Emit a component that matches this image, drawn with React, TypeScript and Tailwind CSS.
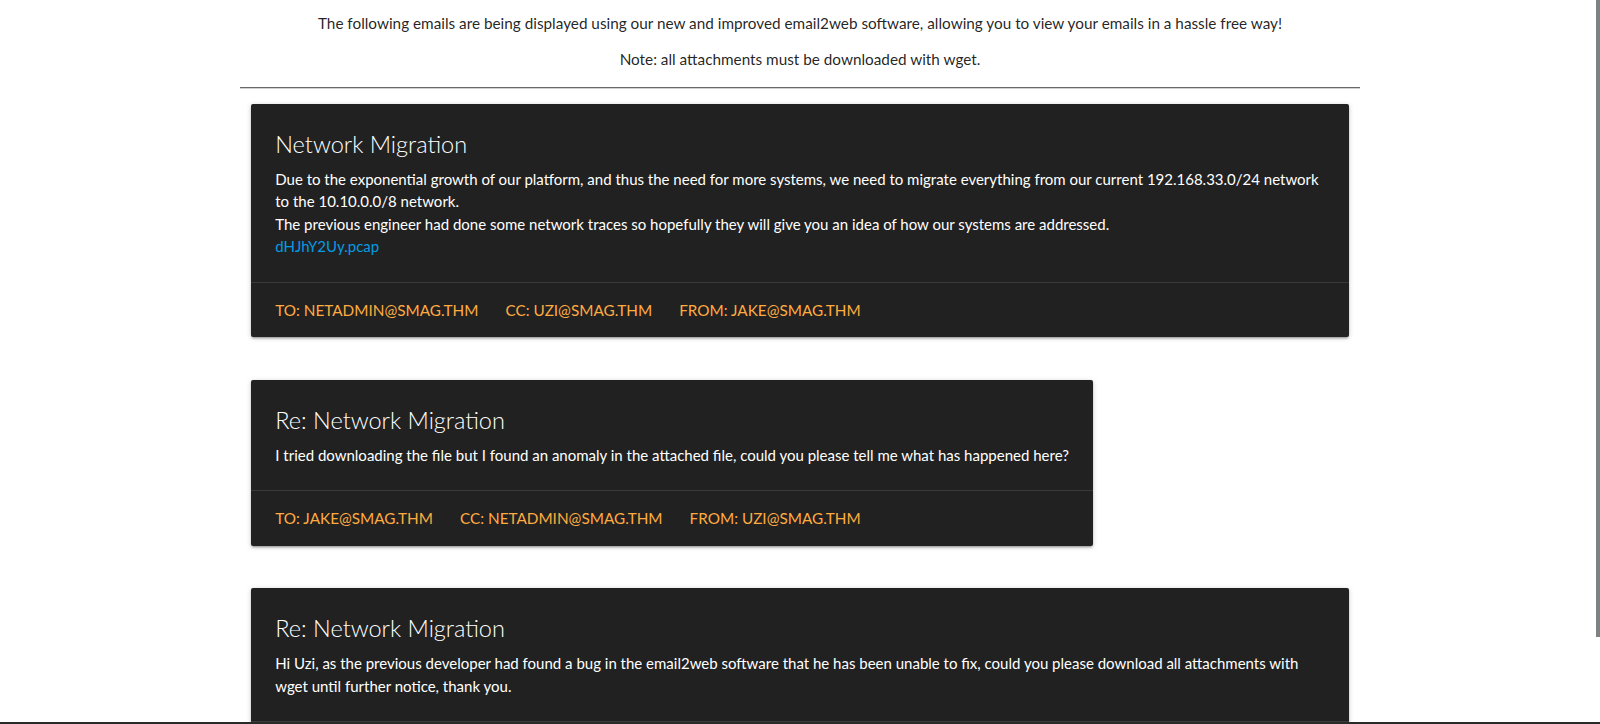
import React from "react";

type Email = {
  subject: string;
  body: React.ReactNode;
  to: string;
  cc: string;
  from: string;
};

const emails: Email[] = [
  {
    subject: "Network Migration",
    body: (
      <>
        Due to the exponential growth of our platform, and thus the need for more systems, we need to migrate
        everything from our current 192.168.33.0/24 network to the 10.10.0.0/8 network.
        <br />
        The previous engineer had done some network traces so hopefully they will give you an idea of how our
        systems are addressed.
        <br />
        <a href="#" className="text-[#039be5]">
          dHJhY2Uy.pcap
        </a>
      </>
    ),
    to: "netadmin@smag.thm",
    cc: "uzi@smag.thm",
    from: "jake@smag.thm",
  },
  {
    subject: "Re: Network Migration",
    body: (
      <>
        I tried downloading the file but I found an anomaly in the attached file, could you please tell me what has
        happened here?
      </>
    ),
    to: "jake@smag.thm",
    cc: "netadmin@smag.thm",
    from: "uzi@smag.thm",
  },
  {
    subject: "Re: Network Migration",
    body: (
      <>
        Hi Uzi, as the previous developer had found a bug in the email2web software that he has been unable to fix,
        could you please download all attachments with wget until further notice, thank you.
      </>
    ),
    to: "uzi@smag.thm",
    cc: "netadmin@smag.thm",
    from: "jake@smag.thm",
  },
];

function EmailCard({ email }: { email: Email }) {
  // row + col: padding instead of margins so nothing collapses
  return (
    <div className="px-[11.25px] pt-[7.5px] pb-[35px]">
      <div className="w-fit max-w-full rounded-[2px] bg-[#212121] text-white shadow-[0_2px_2px_0_rgba(0,0,0,0.14),0_3px_1px_-2px_rgba(0,0,0,0.12),0_1px_5px_0_rgba(0,0,0,0.2)]">
        <div className="p-[24px]">
          <div className="mb-[8px] text-[23.5px] font-light leading-[32px]">{email.subject}</div>
          <p>{email.body}</p>
        </div>
        <div className="flex border-t border-[rgba(160,160,160,0.2)] px-[24px] py-[16px] text-[15.3px] uppercase text-[#ffab40]">
          <a href="#" className="mr-[27px]">
            To: {email.to}
          </a>
          <a href="#" className="mr-[27px]">
            CC: {email.cc}
          </a>
          <a href="#" className="mr-[27px]">
            From: {email.from}
          </a>
        </div>
      </div>
    </div>
  );
}

export default function App() {
  return (
    <div className="relative h-screen overflow-hidden bg-white font-['Lato',sans-serif] text-[15px] leading-[22.5px] text-[rgba(0,0,0,0.87)]">
      <div className="mx-auto w-[70%]">
        <div className="pt-[12px] text-center text-[15.3px]">
          <p>
            The following emails are being displayed using our new and improved email2web software, allowing you to
            view your emails in a hassle free way!
          </p>
          <p className="mt-[13px]">Note: all attachments must be downloaded with wget.</p>
        </div>
        <hr className="mt-[16.5px] mb-[7.5px] border-0 border-t border-b border-t-[#6a6a6a] border-b-[#d0d0d0]" />
        {emails.map((e, i) => (
          <EmailCard key={i} email={e} />
        ))}
      </div>

      {/* scrollbar thumb + bottom edge */}
      <div className="absolute right-0 top-0 h-[637px] w-[4px] bg-[#7d8181]" />
      <div className="absolute bottom-0 left-0 h-[2px] w-full bg-[#2a2a2a]" />
    </div>
  );
}
